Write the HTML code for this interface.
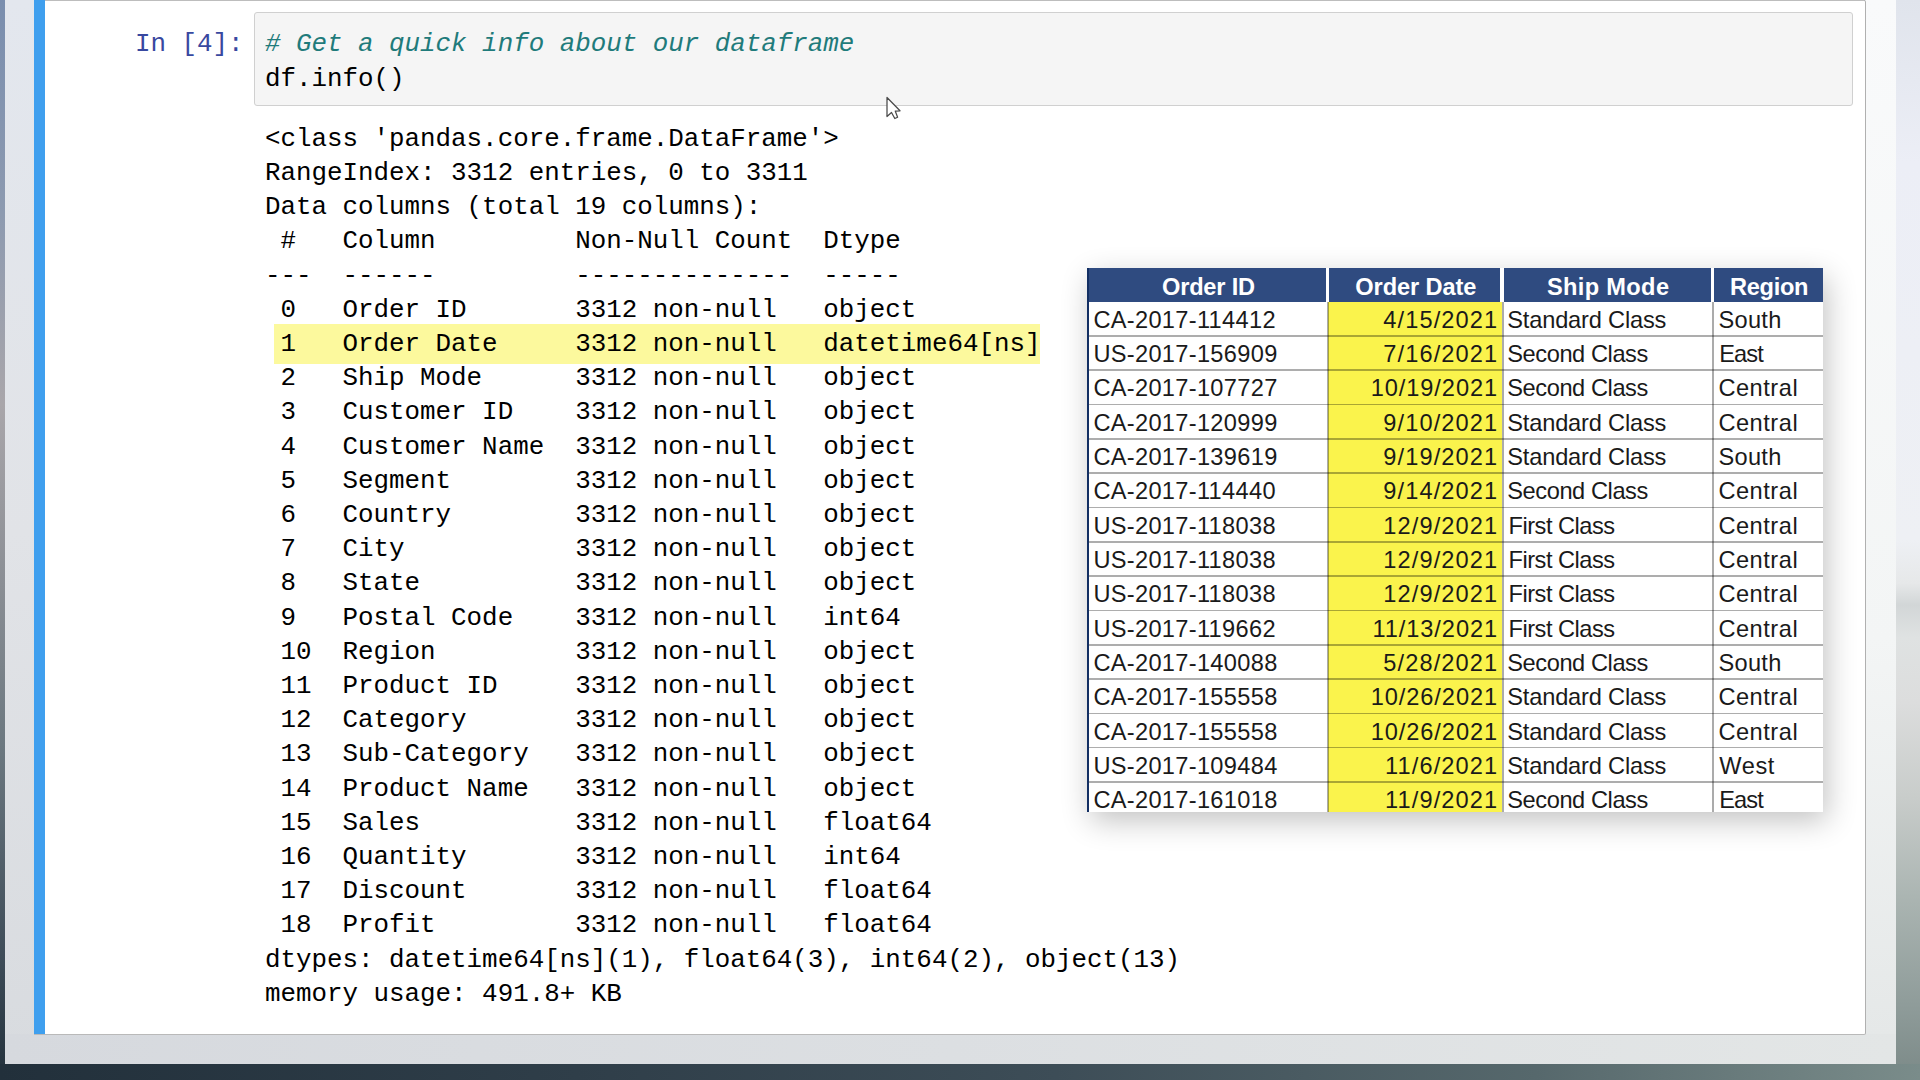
<!DOCTYPE html>
<html><head><meta charset="utf-8"><style>
html,body{margin:0;padding:0;}
body{width:1920px;height:1080px;position:relative;overflow:hidden;background:#3e4d57;}
.abs{position:absolute;}
#bgR{position:absolute;left:1896px;top:0;width:24px;height:1080px;background:linear-gradient(180deg,#e0e4ec 0%,#eceef6 15%,#eef0f4 50%,#e6e8e9 54%,#d2d6d7 56%,#dfe2e2 59%,#dcdddd 65%,#c8ccca 74%,#abb5b2 83%,#8f9c9a 93%,#7b8987 100%);}
#bgB{position:absolute;left:0;top:1064px;width:1920px;height:16px;background:linear-gradient(90deg,#22303b 0%,#2f3e49 30%,#3d4d57 55%,#56686c 80%,#7a8c8a 100%);}
#bgL{position:absolute;left:0;top:0;width:5px;height:1064px;background:linear-gradient(180deg,#7a8eae 0%,#8d9ab0 20%,#a9a6aa 38%,#8a8e94 55%,#6c7880 70%,#3e4c58 90%,#26343f 100%);}
#panelL{position:absolute;left:5px;top:0;width:29px;height:1064px;background:linear-gradient(180deg,#e3e7ee 0%,#e1e3e7 50%,#d8dbdf 100%);}
#panelR{position:absolute;left:1865px;top:0;width:31px;height:1064px;background:linear-gradient(180deg,#f9fafb 0%,#f3f5f5 60%,#e4e7e7 100%);}
#panelB{position:absolute;left:5px;top:1034px;width:1891px;height:30px;background:linear-gradient(90deg,#d6d9de 0%,#dcdfe2 50%,#e3e6e6 100%);}
#cell{position:absolute;left:34px;top:0;width:1832px;height:1035px;background:#fff;border-right:1px solid #b0b0b0;border-bottom:1px solid #b9b9b9;border-top:1px solid #bdbdbd;border-radius:0 2px 2px 0;box-sizing:border-box;}
#bar{position:absolute;left:34px;top:0;width:11px;height:1034px;background:#3f9fee;}
#code{position:absolute;left:254px;top:12px;width:1599px;height:94px;background:#f5f5f5;border:1px solid #d0d0d0;border-radius:3px;box-sizing:border-box;}
.mono{font-family:"Liberation Mono",monospace;font-size:25.85px;line-height:34.24px;white-space:pre;position:absolute;}
.ln{position:absolute;left:265px;font-family:"Liberation Mono",monospace;font-size:25.85px;line-height:34.24px;white-space:pre;color:#000;}
#hl{position:absolute;left:273.7px;top:324.3px;width:766.5px;height:39.6px;background:#fcf99d;}
#prompt{left:135px;top:27px;color:#3848a0;}
#c1{left:265px;top:27px;color:#1f7b7b;font-style:italic;}
#c2{left:265px;top:61.8px;color:#000;}
#tshadow{position:absolute;left:1087px;top:268px;width:736px;height:544px;box-shadow:4px 9px 28px rgba(0,0,0,0.24);background:#fff;}
#tbl{position:absolute;left:0;top:0;width:1920px;height:812px;overflow:hidden;}
.th{position:absolute;top:268px;height:33.69999999999999px;background:#2f4b80;}
.tht{position:absolute;top:268px;height:33.69999999999999px;color:#fff;font:bold 23.6px "Liberation Sans",sans-serif;line-height:38.69999999999999px;white-space:nowrap;}
.yel{position:absolute;background:#faf34c;}
.hl{position:absolute;left:1088px;width:735px;height:1.5px;background:rgba(0,0,0,0.32);}
.vl{position:absolute;top:301.7px;width:1.7px;height:510.3px;background:rgba(0,0,0,0.33);}
.td{position:absolute;height:34.33px;line-height:34.33px;font:23.6px "Liberation Sans",sans-serif;line-height:34.33px;color:#1a1a1a;white-space:nowrap;}
.td.r{text-align:right;}
#tleft{position:absolute;left:1087px;top:268px;width:1.6px;height:544px;background:#132f63;}
</style></head><body>
<div id="bgL"></div><div id="bgR"></div><div id="bgB"></div>
<div id="panelL"></div><div id="panelR"></div><div id="panelB"></div>
<div id="cell"></div>
<div id="bar"></div>
<div id="code"></div>
<div class="mono" id="prompt">In [4]:</div>
<div class="mono" id="c1"># Get a quick info about our dataframe</div>
<div class="mono" id="c2">df.info()</div>
<div id="hl"></div>
<div class="ln" style="top:121.70px">&lt;class 'pandas.core.frame.DataFrame'&gt;</div>
<div class="ln" style="top:155.90px">RangeIndex: 3312 entries, 0 to 3311</div>
<div class="ln" style="top:190.10px">Data columns (total 19 columns):</div>
<div class="ln" style="top:224.30px"> #   Column         Non-Null Count  Dtype         </div>
<div class="ln" style="top:258.50px">---  ------         --------------  -----         </div>
<div class="ln" style="top:292.70px"> 0   Order ID       3312 non-null   object</div>
<div class="ln" style="top:326.90px"> 1   Order Date     3312 non-null   datetime64[ns]</div>
<div class="ln" style="top:361.10px"> 2   Ship Mode      3312 non-null   object</div>
<div class="ln" style="top:395.30px"> 3   Customer ID    3312 non-null   object</div>
<div class="ln" style="top:429.50px"> 4   Customer Name  3312 non-null   object</div>
<div class="ln" style="top:463.70px"> 5   Segment        3312 non-null   object</div>
<div class="ln" style="top:497.90px"> 6   Country        3312 non-null   object</div>
<div class="ln" style="top:532.10px"> 7   City           3312 non-null   object</div>
<div class="ln" style="top:566.30px"> 8   State          3312 non-null   object</div>
<div class="ln" style="top:600.50px"> 9   Postal Code    3312 non-null   int64</div>
<div class="ln" style="top:634.70px"> 10  Region         3312 non-null   object</div>
<div class="ln" style="top:668.90px"> 11  Product ID     3312 non-null   object</div>
<div class="ln" style="top:703.10px"> 12  Category       3312 non-null   object</div>
<div class="ln" style="top:737.30px"> 13  Sub-Category   3312 non-null   object</div>
<div class="ln" style="top:771.50px"> 14  Product Name   3312 non-null   object</div>
<div class="ln" style="top:805.70px"> 15  Sales          3312 non-null   float64</div>
<div class="ln" style="top:839.90px"> 16  Quantity       3312 non-null   int64</div>
<div class="ln" style="top:874.10px"> 17  Discount       3312 non-null   float64</div>
<div class="ln" style="top:908.30px"> 18  Profit         3312 non-null   float64</div>
<div class="ln" style="top:942.50px">dtypes: datetime64[ns](1), float64(3), int64(2), object(13)</div>
<div class="ln" style="top:976.70px">memory usage: 491.8+ KB</div>

<div id="tshadow"></div>
<div id="tbl">
<div class="th" style="left:1087px;width:239px"></div>
<div class="th" style="left:1329px;width:171px"></div>
<div class="th" style="left:1504px;width:207px"></div>
<div class="th" style="left:1714px;width:109px"></div>
<div class="tht" style="left:1162.00px;letter-spacing:-0.194px">Order ID</div>
<div class="tht" style="left:1355.30px;letter-spacing:-0.091px">Order Date</div>
<div class="tht" style="left:1546.90px;letter-spacing:0.356px">Ship Mode</div>
<div class="tht" style="left:1730.00px;letter-spacing:-0.308px">Region</div>
<div class="yel" style="left:1328px;top:301.7px;width:174px;height:510.3px"></div>
<div class="hl" style="top:335.03px"></div>
<div class="hl" style="top:369.36px"></div>
<div class="hl" style="top:403.69px"></div>
<div class="hl" style="top:438.02px"></div>
<div class="hl" style="top:472.35px"></div>
<div class="hl" style="top:506.68px"></div>
<div class="hl" style="top:541.01px"></div>
<div class="hl" style="top:575.34px"></div>
<div class="hl" style="top:609.67px"></div>
<div class="hl" style="top:644.00px"></div>
<div class="hl" style="top:678.33px"></div>
<div class="hl" style="top:712.66px"></div>
<div class="hl" style="top:746.99px"></div>
<div class="hl" style="top:781.32px"></div>
<div class="vl" style="left:1327px"></div>
<div class="vl" style="left:1502px"></div>
<div class="vl" style="left:1712px"></div>
<div class="td" style="top:302.70px;left:1093.40px;letter-spacing:0.32px">CA-2017-114412</div><div class="td" style="top:302.70px;left:1383.30px;letter-spacing:1.107px">4/15/2021</div><div class="td" style="top:302.70px;left:1507.30px;letter-spacing:-0.17px">Standard Class</div><div class="td" style="top:302.70px;left:1718.40px;letter-spacing:0.316px">South</div>
<div class="td" style="top:337.03px;left:1093.40px;letter-spacing:0.32px">US-2017-156909</div><div class="td" style="top:337.03px;left:1383.30px;letter-spacing:1.107px">7/16/2021</div><div class="td" style="top:337.03px;left:1507.30px;letter-spacing:-0.416px">Second Class</div><div class="td" style="top:337.03px;left:1719.30px;letter-spacing:-0.918px">East</div>
<div class="td" style="top:371.36px;left:1093.40px;letter-spacing:0.32px">CA-2017-107727</div><div class="td" style="top:371.36px;left:1370.70px;letter-spacing:0.926px">10/19/2021</div><div class="td" style="top:371.36px;left:1507.30px;letter-spacing:-0.416px">Second Class</div><div class="td" style="top:371.36px;left:1718.40px;letter-spacing:0.531px">Central</div>
<div class="td" style="top:405.69px;left:1093.40px;letter-spacing:0.32px">CA-2017-120999</div><div class="td" style="top:405.69px;left:1383.30px;letter-spacing:1.107px">9/10/2021</div><div class="td" style="top:405.69px;left:1507.30px;letter-spacing:-0.17px">Standard Class</div><div class="td" style="top:405.69px;left:1718.40px;letter-spacing:0.531px">Central</div>
<div class="td" style="top:440.02px;left:1093.40px;letter-spacing:0.32px">CA-2017-139619</div><div class="td" style="top:440.02px;left:1383.30px;letter-spacing:1.107px">9/19/2021</div><div class="td" style="top:440.02px;left:1507.30px;letter-spacing:-0.17px">Standard Class</div><div class="td" style="top:440.02px;left:1718.40px;letter-spacing:0.316px">South</div>
<div class="td" style="top:474.35px;left:1093.40px;letter-spacing:0.32px">CA-2017-114440</div><div class="td" style="top:474.35px;left:1383.30px;letter-spacing:1.107px">9/14/2021</div><div class="td" style="top:474.35px;left:1507.30px;letter-spacing:-0.416px">Second Class</div><div class="td" style="top:474.35px;left:1718.40px;letter-spacing:0.531px">Central</div>
<div class="td" style="top:508.68px;left:1093.40px;letter-spacing:0.32px">US-2017-118038</div><div class="td" style="top:508.68px;left:1383.30px;letter-spacing:1.107px">12/9/2021</div><div class="td" style="top:508.68px;left:1508.50px;letter-spacing:-0.482px">First Class</div><div class="td" style="top:508.68px;left:1718.40px;letter-spacing:0.531px">Central</div>
<div class="td" style="top:543.01px;left:1093.40px;letter-spacing:0.32px">US-2017-118038</div><div class="td" style="top:543.01px;left:1383.30px;letter-spacing:1.107px">12/9/2021</div><div class="td" style="top:543.01px;left:1508.50px;letter-spacing:-0.482px">First Class</div><div class="td" style="top:543.01px;left:1718.40px;letter-spacing:0.531px">Central</div>
<div class="td" style="top:577.34px;left:1093.40px;letter-spacing:0.32px">US-2017-118038</div><div class="td" style="top:577.34px;left:1383.30px;letter-spacing:1.107px">12/9/2021</div><div class="td" style="top:577.34px;left:1508.50px;letter-spacing:-0.482px">First Class</div><div class="td" style="top:577.34px;left:1718.40px;letter-spacing:0.531px">Central</div>
<div class="td" style="top:611.67px;left:1093.40px;letter-spacing:0.32px">US-2017-119662</div><div class="td" style="top:611.67px;left:1372.46px;letter-spacing:0.926px">11/13/2021</div><div class="td" style="top:611.67px;left:1508.50px;letter-spacing:-0.482px">First Class</div><div class="td" style="top:611.67px;left:1718.40px;letter-spacing:0.531px">Central</div>
<div class="td" style="top:646.00px;left:1093.40px;letter-spacing:0.32px">CA-2017-140088</div><div class="td" style="top:646.00px;left:1383.30px;letter-spacing:1.107px">5/28/2021</div><div class="td" style="top:646.00px;left:1507.30px;letter-spacing:-0.416px">Second Class</div><div class="td" style="top:646.00px;left:1718.40px;letter-spacing:0.316px">South</div>
<div class="td" style="top:680.33px;left:1093.40px;letter-spacing:0.32px">CA-2017-155558</div><div class="td" style="top:680.33px;left:1370.70px;letter-spacing:0.926px">10/26/2021</div><div class="td" style="top:680.33px;left:1507.30px;letter-spacing:-0.17px">Standard Class</div><div class="td" style="top:680.33px;left:1718.40px;letter-spacing:0.531px">Central</div>
<div class="td" style="top:714.66px;left:1093.40px;letter-spacing:0.32px">CA-2017-155558</div><div class="td" style="top:714.66px;left:1370.70px;letter-spacing:0.926px">10/26/2021</div><div class="td" style="top:714.66px;left:1507.30px;letter-spacing:-0.17px">Standard Class</div><div class="td" style="top:714.66px;left:1718.40px;letter-spacing:0.531px">Central</div>
<div class="td" style="top:748.99px;left:1093.40px;letter-spacing:0.32px">US-2017-109484</div><div class="td" style="top:748.99px;left:1385.06px;letter-spacing:1.107px">11/6/2021</div><div class="td" style="top:748.99px;left:1507.30px;letter-spacing:-0.17px">Standard Class</div><div class="td" style="top:748.99px;left:1719.30px;letter-spacing:0.58px">West</div>
<div class="td" style="top:783.32px;left:1093.40px;letter-spacing:0.32px">CA-2017-161018</div><div class="td" style="top:783.32px;left:1385.06px;letter-spacing:1.107px">11/9/2021</div><div class="td" style="top:783.32px;left:1507.30px;letter-spacing:-0.416px">Second Class</div><div class="td" style="top:783.32px;left:1719.30px;letter-spacing:-0.918px">East</div>

<div id="tleft"></div>
</div>
<svg style="position:absolute;left:886px;top:96px" width="18" height="25" viewBox="0 0 18 25"><path d="M1 1.5 L1 20.5 L5.5 16.5 L8.8 22.5 L11.6 21.2 L9.3 15.2 L14 14.8 Z" fill="#fff" stroke="#4a4a4a" stroke-width="1.25" stroke-linejoin="round"/></svg>
</body></html>
